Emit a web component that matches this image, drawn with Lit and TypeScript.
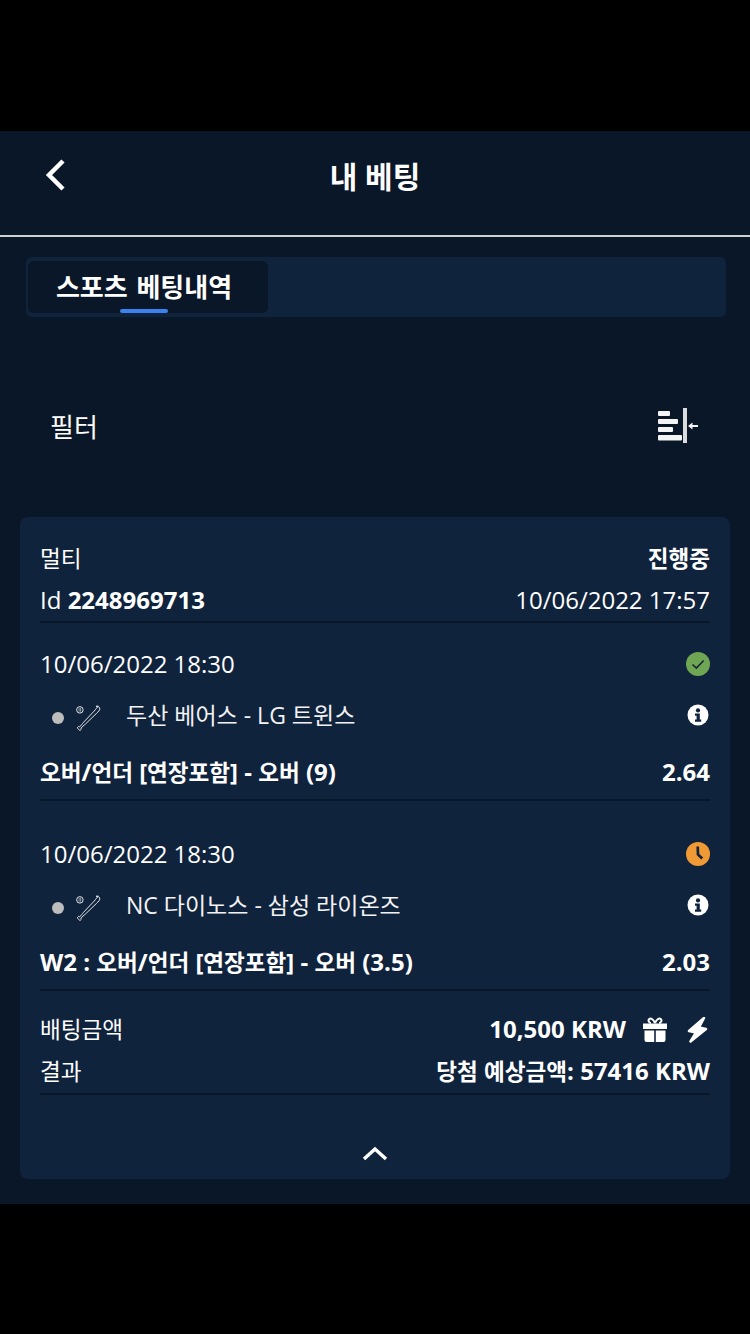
import { LitElement, html, css, svg } from 'lit';
import { customElement } from 'lit/decorators.js';

interface Leg {
  time: string;
  status: 'won' | 'pending';
  teams: string;
  market: string;
  odds: string;
}

const LEGS: Leg[] = [
  { time: '10/06/2022 18:30', status: 'won', teams: '두산 베어스 - LG 트윈스', market: '오버/언더 [연장포함] - 오버 (9)', odds: '2.64' },
  { time: '10/06/2022 18:30', status: 'pending', teams: 'NC 다이노스 - 삼성 라이온즈', market: 'W2 : 오버/언더 [연장포함] - 오버 (3.5)', odds: '2.03' },
];

// hangul runs come out a little smaller than the latin text in the original
const ko = (text: string) =>
  text.split(/([\uac00-\ud7a3]+)/).map((part, i) => (i % 2 ? html`<span class="ko">${part}</span>` : part));

const checkIcon = html`<svg class="status" viewBox="0 0 24 24">
  <circle cx="12" cy="12" r="12" fill="#6fa653"></circle>
  <path d="M6.500 12.500l3.800 3.600 7.400-7.600" fill="none" stroke="#14233a" stroke-width="1.500"></path>
</svg>`;

const clockIcon = html`<svg class="status" viewBox="0 0 24 24">
  <circle cx="12" cy="12" r="12" fill="#f09a36"></circle>
  <path d="M10.400 4.500h2.600l.4 7.500 3.800 3.600-1.900 2-4.700-4.500z" fill="#14233a"></path>
</svg>`;

const infoIcon = html`<svg class="info" viewBox="0 0 22 22">
  <circle cx="11" cy="11" r="10.500" fill="#fff"></circle>
  <circle cx="11" cy="6.400" r="2.100" fill="#10233d"></circle>
  <path d="M8 9.600h4.800v6h1.400v2.200H8v-2.200h1.600v-3.800H8z" fill="#10233d"></path>
</svg>`;

const batIcon = svg`<circle cx="4.500" cy="4.500" r="3" fill="none" stroke="#e8e8e8" stroke-width=".9"></circle>
  <path d="M3.800 2.800v3.400M5.200 2.800v3.400" stroke="#e8e8e8" stroke-width=".6" fill="none"></path>
  <path d="M19.500 1.200c1.400-.6 3.600.9 3.400 2.600-.1 1-1.200 2.200-3 3.900L9.600 17.600c-.8.8-1.600 1.200-2.200 1.800l-2 2.100.6.7-1.400 1.400-2.600-2.500 1.400-1.400.7.6 2-2.100c.6-.6 1-1.400 1.800-2.200l9.800-10.400c1.700-1.800 2.800-3.800 3.800-4.400z" fill="none" stroke="#e8e8e8" stroke-width=".9"></path>`;

@customElement('app-root')
export class AppRoot extends LitElement {
  static styles = css`
    :host {
      display: block;
      height: 1334px;
      background: #000;
      font-family: 'Open Sans', 'Noto Sans CJK KR', sans-serif;
      color: #fff;
      font-size: 24px;
    }

    .ko {
      font-size: 0.94em;
    }

    .screen {
      position: relative;
      top: 131px;
      height: 1073px;
      background: #0a1728;
      display: flex;
      flex-direction: column;
    }

    .header {
      height: 104px;
      flex: none;
      border-bottom: 2px solid #d0d0d0;
      display: flex;
      align-items: center;
      justify-content: center;
      position: relative;
    }

    .header h1 {
      margin: 0 0 12px;
      font-size: 30px;
      font-weight: 700;
      line-height: 40px;
    }

    .back {
      position: absolute;
      left: 44px;
      top: 27px;
      width: 22px;
      height: 34px;
    }

    .tabs {
      margin: 20px 24px 0 26px;
      height: 60px;
      flex: none;
      background: #10233d;
      border-radius: 6px;
      padding: 4px 2px;
      box-sizing: border-box;
    }

    .tab {
      position: relative;
      width: 240px;
      height: 52px;
      padding: 0 8px 3px 0;
      box-sizing: border-box;
      background: #0a1728;
      border-radius: 6px;
      display: flex;
      align-items: center;
      justify-content: center;
      font-size: 26px;
      font-weight: 700;
      word-spacing: 2px;
    }

    .tab::after {
      content: '';
      position: absolute;
      left: 92px;
      bottom: 0;
      width: 48px;
      height: 4px;
      border-radius: 2px;
      background: #3b82f0;
    }

    .filter {
      margin-top: 71px;
      height: 76px;
      flex: none;
      padding: 0 50px;
      display: flex;
      align-items: center;
      justify-content: space-between;
      font-size: 26px;
    }

    .filter svg {
      width: 42px;
      height: 36px;
      margin-right: 1px;
    }

    .card {
      margin: 53px 20px 0;
      height: 662px;
      flex: none;
      background: #10233d;
      border-radius: 8px;
      padding: 20px 20px 0;
      box-sizing: border-box;
      display: flex;
      flex-direction: column;
    }

    .row {
      display: flex;
      align-items: center;
      justify-content: space-between;
      flex: none;
    }

    .row > span,
    .stake > span,
    .teams .name {
      margin-bottom: 2px;
    }

    .r42 {
      height: 42px;
    }

    .b {
      font-weight: 700;
    }

    .divider {
      height: 2px;
      background: #0a1728;
      flex: none;
    }

    .leg {
      padding-top: 20px;
      flex: none;
      display: flex;
      flex-direction: column;
    }

    .leg + .divider + .leg {
      padding-top: 32px;
    }

    .leg .time {
      height: 42px;
    }

    .status {
      width: 24px;
      height: 24px;
    }

    .info {
      width: 22px;
      height: 22px;
      margin-right: 1px;
    }

    .teams {
      height: 60px;
      padding-left: 12px;
    }

    .teams .left {
      display: flex;
      align-items: center;
    }

    .dot {
      width: 12px;
      height: 12px;
      border-radius: 50%;
      background: #bdbdbd;
      margin: 6px 11px 0 0;
    }

    .bat {
      width: 26px;
      height: 26px;
      margin: 6px 25px 0 0;
    }

    .teams .name {
      font-size: 23px;
      color: #f2f2f2;
    }

    .market {
      height: 54px;
    }

    .summary {
      padding-top: 18px;
      flex: none;
    }

    .summary .row > span,
    .summary .stake > span {
      margin-bottom: 4px;
    }

    .stake {
      display: flex;
      align-items: center;
    }

    .gift {
      width: 26px;
      height: 26px;
      margin-left: 16px;
    }

    .bolt {
      width: 22px;
      height: 26px;
      margin: 0 2px 0 18px;
    }

    .chevron {
      align-self: center;
      width: 26px;
      height: 15px;
      margin-top: 51px;
      flex: none;
    }
  `;

  private renderLeg(leg: Leg) {
    return html`
      <div class="leg">
        <div class="row time">
          <span>${leg.time}</span>
          ${leg.status === 'won' ? checkIcon : clockIcon}
        </div>
        <div class="row teams">
          <div class="left">
            <span class="dot"></span>
            <svg class="bat" viewBox="0 0 24 24">${batIcon}</svg>
            <span class="name">${leg.teams}</span>
          </div>
          ${infoIcon}
        </div>
        <div class="row market b">
          <span>${ko(leg.market)}</span>
          <span>${leg.odds}</span>
        </div>
      </div>
      <div class="divider"></div>
    `;
  }

  render() {
    return html`
      <div class="screen">
        <div class="header">
          <svg class="back" viewBox="0 0 22 34">
            <path d="M19 3L5 17l14 14" fill="none" stroke="#fff" stroke-width="4.500"></path>
          </svg>
          <h1>내 베팅</h1>
        </div>
        <div class="tabs"><div class="tab">스포츠 베팅내역</div></div>
        <div class="filter">
          <span>필터</span>
          <svg viewBox="0 0 42 36">
            <g fill="#f4f4f4">
              <rect x="1" y="3" width="12" height="5" rx="1"></rect>
              <rect x="1" y="11" width="20" height="5" rx="1"></rect>
              <rect x="1" y="19" width="15" height="5" rx="1"></rect>
              <rect x="1" y="27" width="24" height="5.500" rx="1"></rect>
              <rect x="26" y="0" width="4" height="35" fill="#dcdcdc"></rect>
              <path d="M31 18l4.500-3.500v2.500H41v2h-5.500v2.500z"></path>
            </g>
          </svg>
        </div>
        <div class="card">
          <div class="row r42"><span class="ko">멀티</span><span class="b ko">진행중</span></div>
          <div class="row r42">
            <span>Id <span class="b">2248969713</span></span>
            <span>10/06/2022 17:57</span>
          </div>
          <div class="divider"></div>
          ${LEGS.map((leg) => this.renderLeg(leg))}
          <div class="summary">
            <div class="row r42">
              <span class="ko">배팅금액</span>
              <div class="stake b">
                <span>10,500 KRW</span>
                <svg class="gift" viewBox="0 0 26 26">
                  <path d="M1 6.500h24V12H1zM2.500 13.500h9.700V25H4.500a2 2 0 0 1-2-2zM13.800 13.500h9.700V23a2 2 0 0 1-2 2h-7.700z" fill="#fff"></path>
                  <path d="M13 6C11.500 2.500 9 1 7.500 1.800 5.800 2.800 6.500 6 9 6M13 6c1.500-3.500 4-5 5.500-4.200C20.200 2.800 19.500 6 17 6" fill="none" stroke="#fff" stroke-width="2"></path>
                </svg>
                <svg class="bolt" viewBox="0 0 22 26">
                  <path d="M18 1L3 14l7 1.500L4.500 24.500 20 12l-7-1.500z" fill="#fff" stroke="#fff" stroke-width="2.500" stroke-linejoin="round"></path>
                </svg>
              </div>
            </div>
            <div class="row r42"><span class="ko">결과</span><span class="b">${ko('당첨 예상금액: 57416 KRW')}</span></div>
          </div>
          <div class="divider"></div>
          <svg class="chevron" viewBox="0 0 26 15">
            <path d="M2 13L13 3l11 10" fill="none" stroke="#fff" stroke-width="3.500"></path>
          </svg>
        </div>
      </div>
    `;
  }
}
